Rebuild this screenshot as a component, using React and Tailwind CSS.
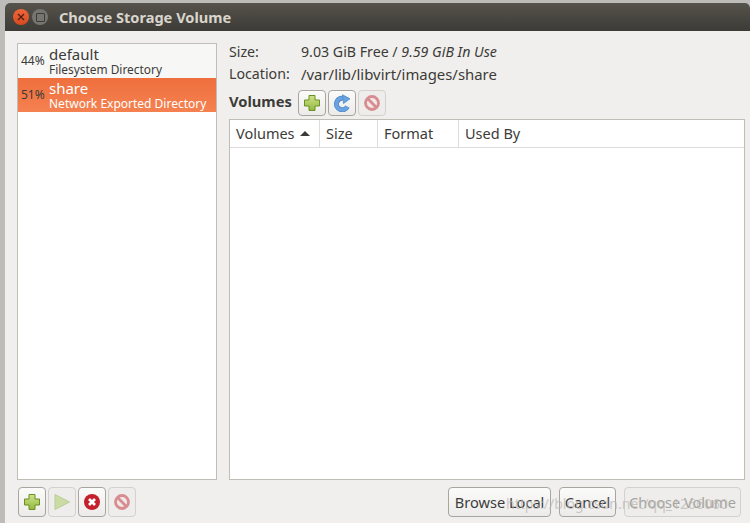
import React from "react";

function Plus() {
  return (
    <svg width="18" height="18" viewBox="0 0 18 18">
      <defs>
        <linearGradient id="plusFill" x1="0" y1="0" x2="0" y2="1">
          <stop offset="0" stopColor="#cfe389" />
          <stop offset="1" stopColor="#93b93f" />
        </linearGradient>
      </defs>
      <path d="M6 1.5h6v4.5h4.5v6h-4.5v4.5h-6v-4.5h-4.5v-6h4.5z" fill="url(#plusFill)" stroke="#6a9023" strokeWidth="1" />
    </svg>
  );
}

function Refresh() {
  return (
    <svg width="18" height="18" viewBox="0 0 18 18">
      <path d="M14.4 12.6a5.8 5.8 0 1 1-4.4-8.4" fill="none" stroke="#4f8aca" strokeWidth="5" />
      <path d="M14.4 12.6a5.8 5.8 0 1 1-4.4-8.4" fill="none" stroke="#6aa3df" strokeWidth="3.4" />
      <path d="M9.5 .8l7.5 4-6.5 4.7z" fill="#6aa3df" stroke="#4f8aca" strokeWidth="0.8" />
    </svg>
  );
}

function Stop() {
  return (
    <svg width="18" height="18" viewBox="0 0 18 18" className="opacity-50">
      <circle cx="9" cy="9" r="6.5" fill="#f4e4e4" stroke="#c22f38" strokeWidth="2.8" />
      <path d="M4.6 4.6l8.8 8.8" stroke="#c22f38" strokeWidth="2.8" />
    </svg>
  );
}

function Play() {
  return (
    <svg width="18" height="18" viewBox="0 0 18 18" className="opacity-50">
      <path d="M2 1.5l14.5 7.5-14.5 7.5z" fill="#a9cb63" stroke="#8aad45" strokeWidth="1" />
    </svg>
  );
}

function Delete() {
  return (
    <svg width="18" height="18" viewBox="0 0 18 18">
      <circle cx="9" cy="9" r="8" fill="#c3202c" />
      <path d="M6 6l6 6M12 6l-6 6" stroke="#ffffff" strokeWidth="2.8" />
    </svg>
  );
}

function IconButton({ disabled, height, children }) {
  return (
    <div
      className={`w-[28px] flex items-center justify-center rounded-[4px] border ${height} ${
        disabled
          ? "border-[#d4d1cc] bg-[#eeedeb]"
          : "border-[#a8a59f] bg-gradient-to-b from-[#fbfbfa] to-[#ecebe9]"
      }`}
    >
      {children}
    </div>
  );
}

function TextButton({ width, disabled, children }) {
  return (
    <div
      className={`h-[30px] pt-[2px] flex items-center justify-center rounded-[4px] border text-[14.6px] ${width} ${
        disabled
          ? "border-[#d4d1cc] bg-[#eeedeb] text-[#a4a29e]"
          : "border-[#a8a59f] bg-gradient-to-b from-[#fbfbfa] to-[#ecebe9] text-[#3c3c3c]"
      }`}
    >
      {children}
    </div>
  );
}

function HeaderCell({ width, children }) {
  return (
    <div className={`h-full flex items-center gap-[5px] pl-[6px] border-r border-[#dedcd9] ${width}`}>
      {children}
    </div>
  );
}

export default function App() {
  return (
    <div className="relative w-[750px] h-[523px] bg-[#bdbcb9] overflow-hidden pl-[5px] pt-[3px] font-['Noto_Sans',sans-serif] text-[#3c3b37]">
      <div className="w-[745px] h-[520px] rounded-t-[5px] bg-[#f0efed] flex flex-col overflow-hidden">
        <div className="h-[28px] shrink-0 flex items-center bg-gradient-to-b from-[#56534c] to-[#3d3b36] pl-[8px]">
          <div className="w-[16px] h-[16px] rounded-full bg-gradient-to-b from-[#f0673a] to-[#d8481f] flex items-center justify-center">
            <svg width="8" height="8" viewBox="0 0 8 8">
              <path d="M1 1l6 6M7 1l-6 6" stroke="#4a2012" strokeWidth="1.3" />
            </svg>
          </div>
          <div className="ml-[3px] w-[16px] h-[16px] rounded-full bg-[#777570] flex items-center justify-center">
            <div className="w-[9px] h-[9px] border border-[#3d3b36] rounded-[1px]" />
          </div>
          <div className="ml-[11px] pt-[2px] text-[14.6px] font-bold text-[#d9d5cc]">Choose Storage Volume</div>
        </div>

        <div className="flex-1 flex gap-[12px] pl-[12px] pr-[5px] pt-[12px]">
          <div className="w-[200px] h-[437px] shrink-0 border border-[#c0bdb7] bg-white">
            <div className="h-[34px] pt-[1px] flex items-center bg-[#f7f7f6]">
              <div className="w-[31px] pl-[3px] pb-[2px] text-[12px]">44%</div>
              <div>
                <div className="text-[15px] leading-[15px]">default</div>
                <div className="text-[11.9px] leading-[15px]">Filesystem Directory</div>
              </div>
            </div>
            <div className="h-[34px] pt-[1px] flex items-center bg-gradient-to-b from-[#ee6f3d] to-[#f58150]">
              <div className="w-[31px] pl-[3px] pb-[2px] text-[12px]">51%</div>
              <div className="text-white">
                <div className="text-[15px] leading-[15px]">share</div>
                <div className="text-[12px] leading-[15px]">Network Exported Directory</div>
              </div>
            </div>
          </div>

          <div className="flex-1 min-w-0">
            <div className="flex items-center h-[18px] text-[14.2px]">
              <div className="w-[72px]">Size:</div>
              <div>9.03 GiB Free / <span className="italic">9.59 GiB In Use</span></div>
            </div>
            <div className="flex items-center h-[18px] mt-[4px] text-[14.2px]">
              <div className="w-[72px]">Location:</div>
              <div className="text-[14.9px]">/var/lib/libvirt/images/share</div>
            </div>
            <div className="flex items-center gap-[2px] mt-[7px]">
              <div className="w-[67px] pb-[3px] text-[14.7px] font-bold">Volumes</div>
              <IconButton height="h-[26px]"><Plus /></IconButton>
              <IconButton height="h-[26px]"><Refresh /></IconButton>
              <IconButton height="h-[26px]" disabled><Stop /></IconButton>
            </div>
            <div className="mt-[3px] h-[361px] border border-[#c0bdb7] bg-white">
              <div className="h-[28px] flex items-center border-b border-[#dedcd9] text-[14.5px]">
                <HeaderCell width="w-[90px]">
                  <span>Volumes</span>
                  <div className="w-0 h-0 border-x-[5px] border-x-transparent border-b-[5px] border-b-[#3c3b37]" />
                </HeaderCell>
                <HeaderCell width="w-[58px]">Size</HeaderCell>
                <HeaderCell width="w-[81px]">Format</HeaderCell>
                <div className="pl-[6px]">Used By</div>
              </div>
            </div>
          </div>
        </div>

        <div className="h-[36px] shrink-0 flex items-start justify-between pl-[13px] pr-[9px]">
          <div className="flex gap-[2px]">
            <IconButton height="h-[30px]"><Plus /></IconButton>
            <IconButton height="h-[30px]" disabled><Play /></IconButton>
            <IconButton height="h-[30px]"><Delete /></IconButton>
            <IconButton height="h-[30px]" disabled><Stop /></IconButton>
          </div>
          <div className="flex gap-[8px]">
            <TextButton width="w-[103px]">Browse Local</TextButton>
            <TextButton width="w-[57px]">Cancel</TextButton>
            <TextButton width="w-[117px]" disabled>Choose Volume</TextButton>
          </div>
        </div>
      </div>
      {/* faint watermark lying over the buttons */}
      <div className="absolute left-[506px] top-[493px] text-[14px] text-[#b8b6b2]/70 whitespace-nowrap">https://blog.csdn.net/qq_1266060</div>
    </div>
  );
}
